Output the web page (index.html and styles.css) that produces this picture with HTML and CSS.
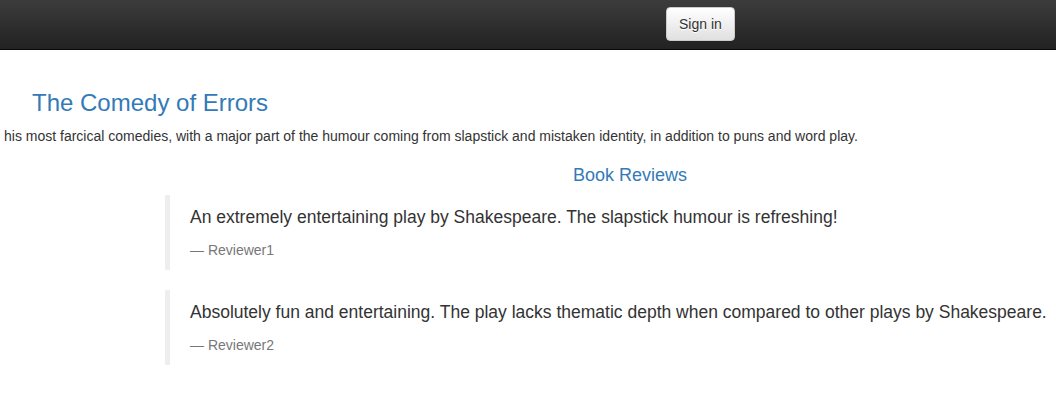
FILE: index.html
```html
<!DOCTYPE html>
<html lang="en">
<head>
  <meta charset="UTF-8">
  <title>Simple Bookstore App</title>
  <link rel="stylesheet" href="styles.css">
</head>
<body>
  <nav class="navbar">
    <div class="navbar-form">
      <button type="button" class="btn-default">Sign in</button>
    </div>
  </nav>

  <div class="container">
    <h3 class="title">The Comedy of Errors</h3>
    <p class="summary">his most farcical comedies, with a major part of the humour coming from slapstick and mistaken identity, in addition to puns and word play.</p>

    <div class="reviews">
      <h4 class="reviews-title">Book Reviews</h4>
      <blockquote>
        <p>An extremely entertaining play by Shakespeare. The slapstick humour is refreshing!</p>
        <footer>Reviewer1</footer>
      </blockquote>
      <blockquote>
        <p>Absolutely fun and entertaining. The play lacks thematic depth when compared to other plays by Shakespeare.</p>
        <footer>Reviewer2</footer>
      </blockquote>
    </div>
  </div>
</body>
</html>
```

FILE: styles.css
```css
html, body {
  margin: 0;
  overflow-x: hidden;
}

body {
  font-family: "Liberation Sans", Arial, Helvetica, sans-serif;
  font-size: 14px;
  line-height: 1.42857143;
  color: #333;
  background: #fff;
}

.navbar {
  height: 49px;
  background: linear-gradient(to bottom, #3c3c3c 0, #222 100%);
  border-bottom: 1px solid #080808;
}

.navbar-form {
  padding: 7px 0 0 666px;
}

.btn-default {
  font-family: inherit;
  font-size: 14px;
  line-height: 1.42857143;
  padding: 6px 12px;
  color: #333;
  background: linear-gradient(to bottom, #fff 0, #e0e0e0 100%);
  border: 1px solid #ccc;
  border-radius: 4px;
  text-shadow: 0 1px 0 #fff;
  box-shadow: inset 0 1px 0 rgba(255,255,255,0.15), 0 1px 1px rgba(0,0,0,0.075);
  cursor: pointer;
}

.container {
  padding-top: 40px;
}

.title {
  margin: 0 0 10px 32px;
  font-size: 24px;
  font-weight: 500;
  line-height: 1.1;
  color: #337ab7;
}

.summary {
  margin: 0;
  padding-left: 4px;
  white-space: nowrap;
}

.reviews {
  margin-left: 165px;
  width: 930px;
}

.reviews-title {
  margin: 20px 0 9px;
  font-size: 18px;
  font-weight: 500;
  line-height: 1.1;
  color: #337ab7;
  text-align: center;
}

blockquote {
  margin: 0 0 20px;
  padding: 10px 20px;
  border-left: 5px solid #eee;
  font-size: 17.5px;
}

blockquote p {
  margin: 0 0 10px;
  white-space: nowrap;
}

blockquote footer {
  font-size: 80%;
  line-height: 1.42857143;
  color: #777;
}

blockquote footer::before {
  content: "\2014 \00A0";
}
```
